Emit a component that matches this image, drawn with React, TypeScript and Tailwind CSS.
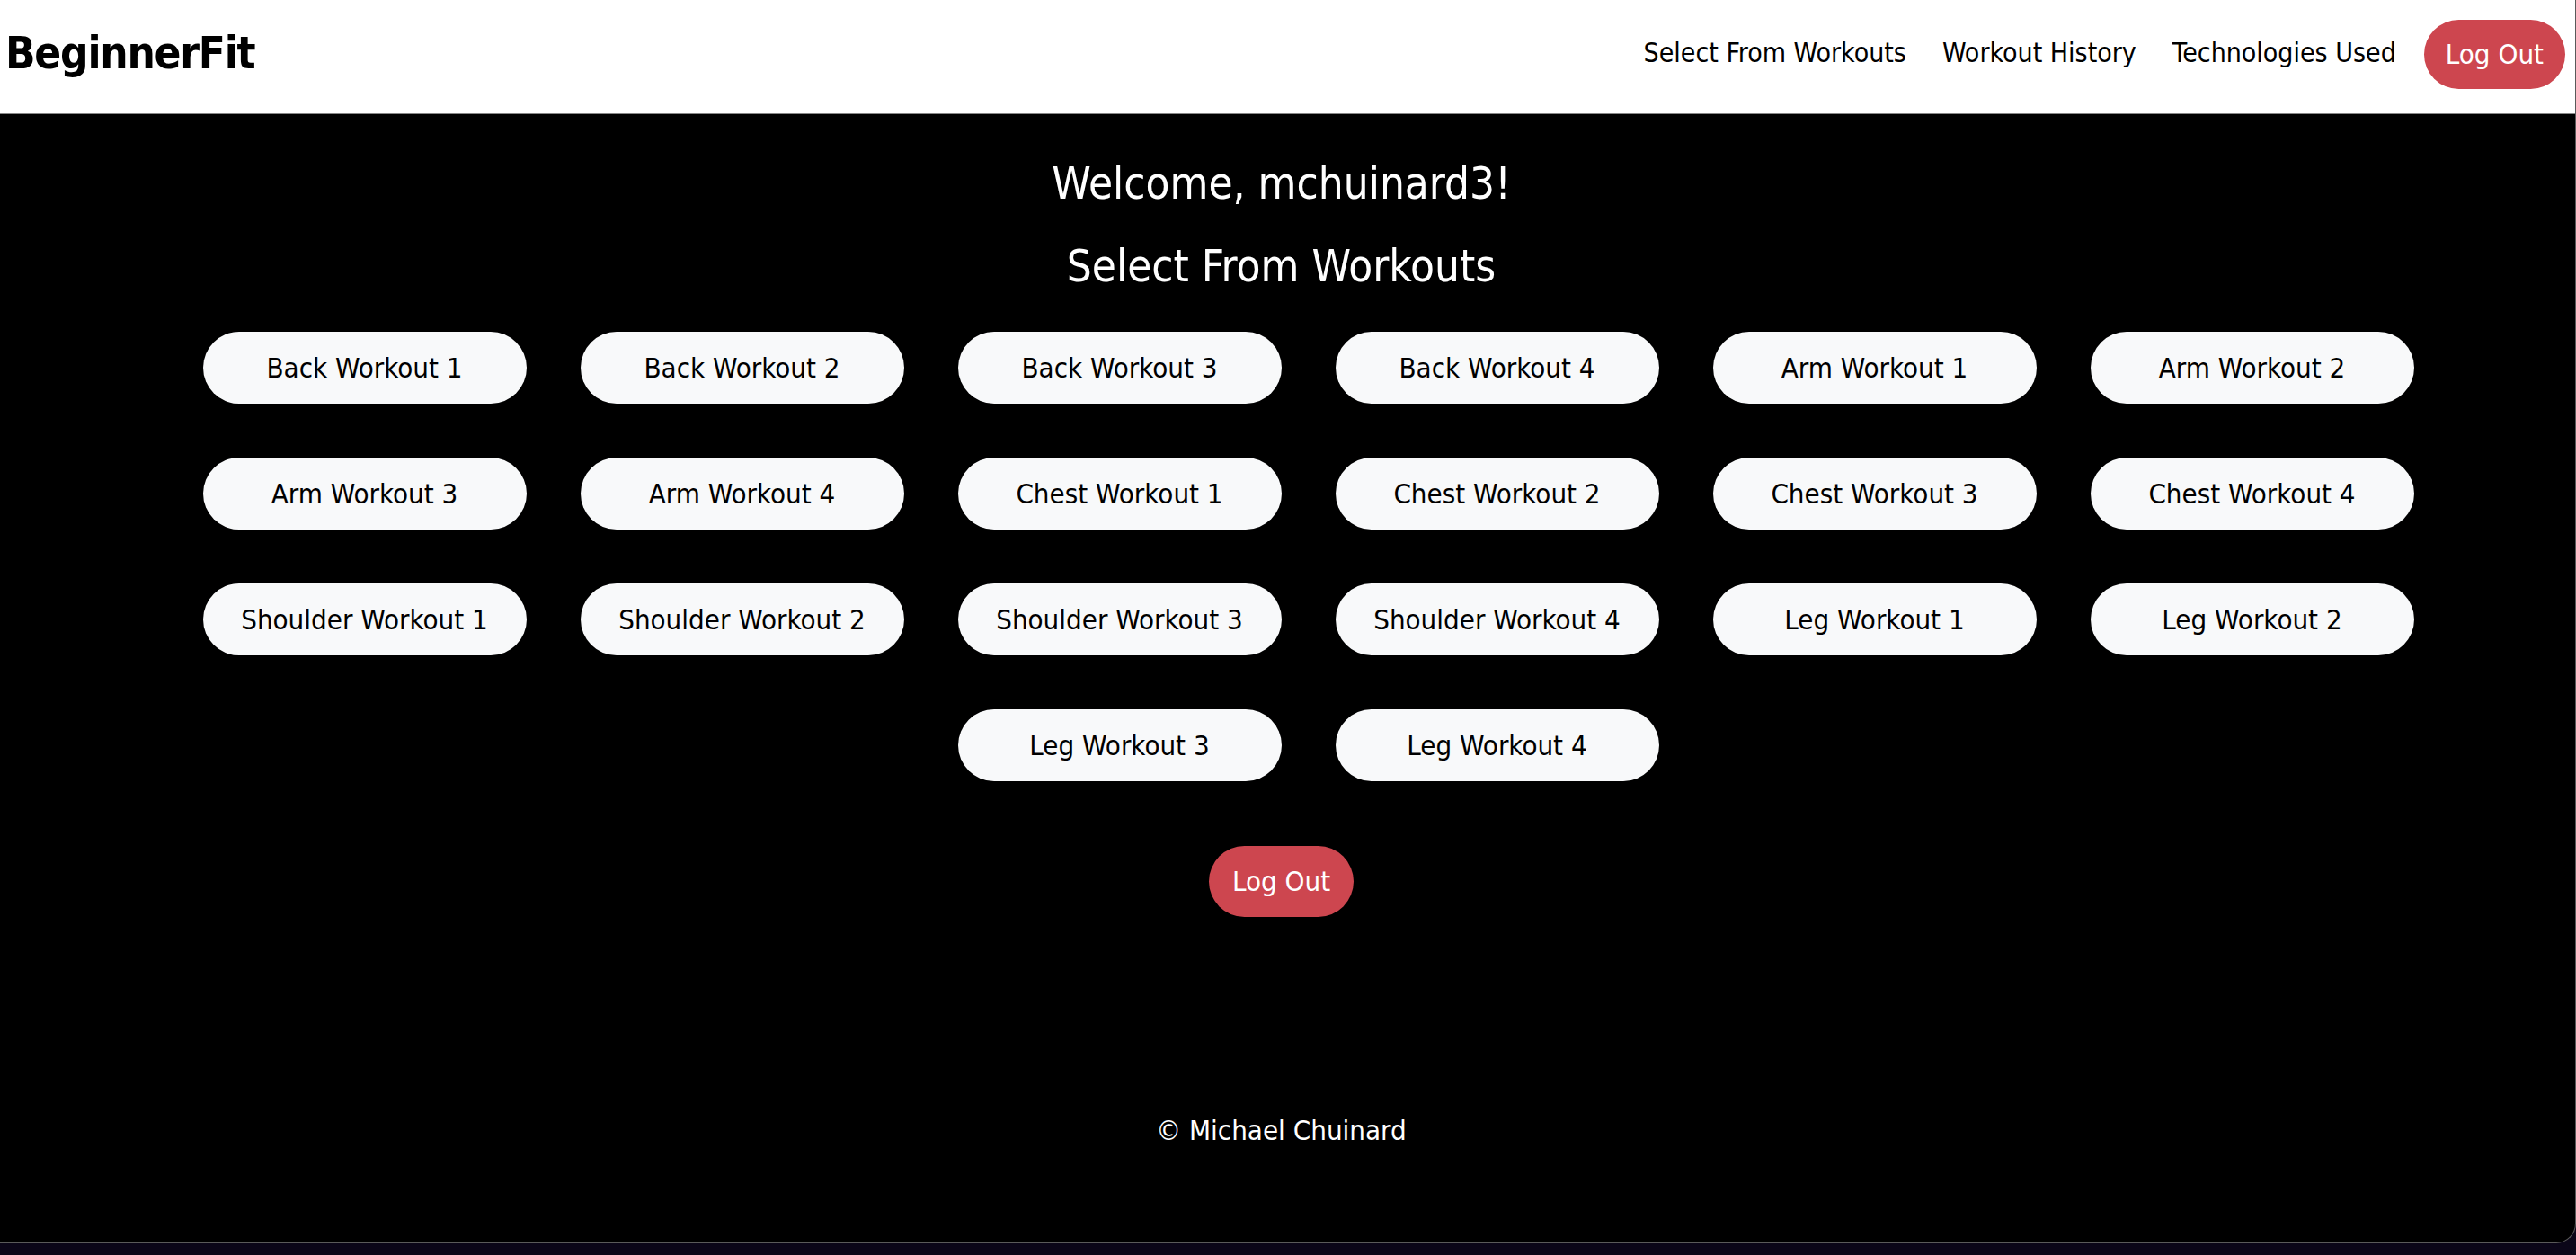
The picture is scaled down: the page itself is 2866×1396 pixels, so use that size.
const workouts = [
  'Back Workout 1', 'Back Workout 2', 'Back Workout 3', 'Back Workout 4',
  'Arm Workout 1', 'Arm Workout 2', 'Arm Workout 3', 'Arm Workout 4',
  'Chest Workout 1', 'Chest Workout 2', 'Chest Workout 3', 'Chest Workout 4',
  'Shoulder Workout 1', 'Shoulder Workout 2', 'Shoulder Workout 3', 'Shoulder Workout 4',
  'Leg Workout 1', 'Leg Workout 2', 'Leg Workout 3', 'Leg Workout 4',
]

export default function App() {
  return (
    <div className="min-h-screen bg-[#0b0618] font-['DejaVu_Sans_Condensed','DejaVu_Sans',sans-serif]">
      <div className="h-[1383px] flex flex-col bg-black border-b border-r border-[#5a5a5a] rounded-br-[22px] overflow-hidden">
        {/* navbar */}
        <header className="h-[127px] bg-white flex items-center justify-between pl-[6px] pr-[11px] pb-[6px] border-b border-[#888]">
          <h1 className="text-[49px] font-bold text-black tracking-tight">BeginnerFit</h1>
          <div className="flex items-center gap-[31px]">
            <nav className="flex items-center gap-[40px] text-[30px] text-black -mt-[4px]">
              <a>Select From Workouts</a>
              <a>Workout History</a>
              <a>Technologies Used</a>
            </nav>
            <button className="h-[77px] px-[24px] rounded-full bg-[#cd464f] text-white text-[31px]">Log Out</button>
          </div>
        </header>

        <main className="flex flex-col items-center text-white pr-[14px]">
          <h2 className="mt-[46px] text-[49px] leading-[64px]">Welcome, mchuinard3!</h2>
          <h2 className="mt-[28px] text-[49px] leading-[64px]">Select From Workouts</h2>

          <div className="mt-[40px] w-[2520px] flex flex-wrap justify-center gap-y-[60px]">
            {workouts.map((w) => (
              <div key={w} className="ml-[60px]">
                <button className="w-[360px] h-[80px] rounded-full bg-[#f8f9fa] text-black text-[31px]">
                  {w}
                </button>
              </div>
            ))}
          </div>

          <button className="mt-[72px] h-[79px] px-[26px] rounded-full bg-[#cd464f] text-white text-[31px]">
            Log Out
          </button>

          <p className="mt-[214px] text-[31px]">© Michael Chuinard</p>
        </main>
      </div>
    </div>
  )
}
